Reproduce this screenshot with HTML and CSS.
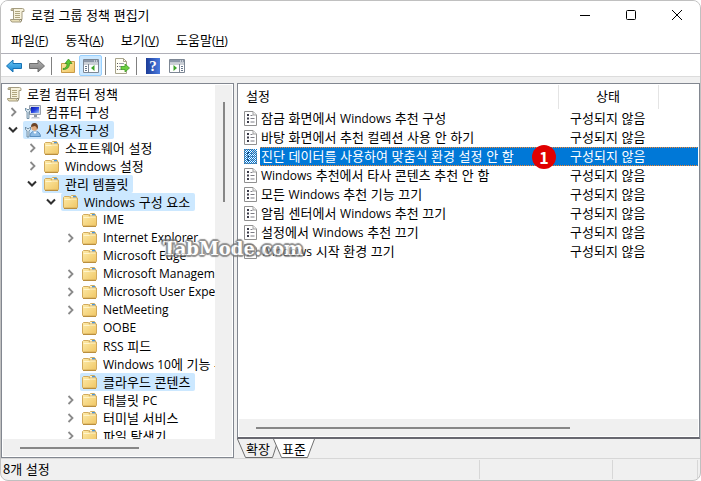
FILE: index.html
```html
<!DOCTYPE html>
<html lang="ko">
<head>
    <meta charset="UTF-8">
    <meta name="viewport" content="width=device-width, initial-scale=1.0">
    <title>로컬 그룹 정책 편집기</title>
    <link rel="stylesheet" href="styles.css">
</head>
<body>
    <!-- shared icons -->
    <svg class="sprite" aria-hidden="true">
        <defs>
            <linearGradient id="gold" x1="0" y1="0" x2="1" y2="1">
                <stop offset="0" stop-color="#fdebaa"/>
                <stop offset="1" stop-color="#f0c663"/>
            </linearGradient>
            <linearGradient id="screen" x1="0" y1="0" x2="1" y2="1">
                <stop offset="0" stop-color="#0a18a8"/>
                <stop offset="0.5" stop-color="#2440e0"/>
                <stop offset="1" stop-color="#9cc4f8"/>
            </linearGradient>
            <linearGradient id="blue" x1="0" y1="0" x2="0" y2="1">
                <stop offset="0" stop-color="#6cc8f4"/>
                <stop offset="1" stop-color="#1482d0"/>
            </linearGradient>
            <linearGradient id="gray" x1="0" y1="0" x2="0" y2="1">
                <stop offset="0" stop-color="#b4b4b4"/>
                <stop offset="1" stop-color="#7c7c7c"/>
            </linearGradient>
            <pattern id="dither" width="2" height="2" patternUnits="userSpaceOnUse">
                <path d="M0 0h1v1H0zM1 1h1v1H1z" fill="#0078d7"/>
            </pattern>
        </defs>
        <symbol id="scroll" viewBox="0 0 16 16">
            <path d="M3.500 1.500h10q1.500 0 1.500 1.500v1.500h-2v8H4.500V3.500q0-1-1-2z" fill="#f7f2dc" stroke="#a49c80"/>
            <path d="M1.500 12.500h9q0 2 1.500 2.500H3q-1.500-.5-1.500-2.500z" fill="#e9dfb8" stroke="#a49c80"/>
            <path d="M3 1.500q-1.500.5-1 2h2.500q0-2-1.500-2z" fill="#d8cfae" stroke="#a49c80"/>
            <path d="M6 4.500h5M6 6.500h5M6 8.500h5M6 10.500h5" stroke="#b0a67f"/>
            <path d="M11 12.500h1.500v2" stroke="#8c8468" fill="none"/>
        </symbol>
        <symbol id="folder" viewBox="0 0 16 16">
            <path d="M7.500 4.500v-2l1-1h4l1 1v2z" fill="#fff3cc" stroke="#d0ae62"/>
            <path d="M10 2h3v1.500h-3z" fill="#4a96dc"/>
            <path d="M.5 13V3.500l1-1h5l1 1.500h7V13q0 1-1 1h-12q-1 0-1-1z" fill="url(#gold)" stroke="#d2aa5c"/>
            <path d="M1.500 5.500h6l1-.5h5" stroke="#fff5cd" fill="none"/>
            <path d="M1 14.500h13" stroke="#b98e3e"/>
        </symbol>
        <symbol id="computer" viewBox="0 0 16 16">
            <path d="M4.500 1.500h11v9h-11z" fill="#d9dde4" stroke="#98a0ac"/>
            <path d="M6 3h8v6H6z" fill="url(#screen)"/>
            <path d="M9 11h3v2H9z" fill="#8d96a3"/>
            <path d="M7 13h7l1 1.500H6z" fill="#c2c8d0"/>
            <path d="M.5 4v2.500L2 8v6.500h2V8l1.500-1.500V4L4 5.500H2z" fill="#d6e4ee" stroke="#5d7f98" stroke-width=".8"/>
        </symbol>
        <symbol id="user" viewBox="0 0 16 16">
            <path d="M5 14.500q0-5 5-5.500 5 .5 5.500 5.500z" fill="#8ebce4" stroke="#5a8fc0"/>
            <path d="M8 9.500l2 2.500 2-2.500z" fill="#fff"/>
            <circle cx="9.500" cy="5.500" r="3.200" fill="#e0aa7c"/>
            <path d="M6 5q0-4 3.500-4T13 5.500l-1 2q0-3-2-3.500-2 .5-4 1z" fill="#6c4528"/>
            <path d="M.5 5v2.500L2 9v6h2V9l1.500-1.500V5L4 6.500H2z" fill="#d6e4ee" stroke="#5d7f98" stroke-width=".8"/>
        </symbol>
        <symbol id="right" viewBox="0 0 8 10">
            <path d="M2.500 1l4 4-4 4" fill="none" stroke="#8a8a8a" stroke-width="1.800"/>
        </symbol>
        <symbol id="down" viewBox="0 0 10 8">
            <path d="M1 1.500l4 4 4-4" fill="none" stroke="#303030" stroke-width="2"/>
        </symbol>
        <symbol id="policy" viewBox="0 0 13 15">
            <path d="M.5.5h8.500l3.500 3.500v10.500H.5z" fill="#fff" stroke="#909090"/>
            <path d="M9 .5v3.500h3.500" fill="#eee" stroke="#a0a0a0"/>
            <path d="M3 3h2v2H3zM3 6.500h2v2H3zM3 10h2v2H3z" fill="#3a3a48"/>
            <path d="M6.500 4.500h2M6.500 7.500h4M6.500 11h4" stroke="#7c7c84"/>
        </symbol>
    </svg>

    <div class="window">
        <header class="titlebar">
            <svg class="icon"><use href="#scroll"/></svg>
            <h1>로컬 그룹 정책 편집기</h1>
            <div class="controls">
                <button type="button" aria-label="최소화"><svg width="10" height="10"><path d="M0 5.500h10" stroke="#000"/></svg></button>
                <button type="button" aria-label="최대화"><svg width="10" height="10"><rect x=".5" y=".5" width="9" height="9" rx="1" fill="none" stroke="#000"/></svg></button>
                <button type="button" aria-label="닫기"><svg width="10" height="10"><path d="M0 0l10 10M10 0L0 10" stroke="#000"/></svg></button>
            </div>
        </header>

        <nav class="menu">
            <button type="button">파일<span class="latin">(<u>F</u>)</span></button>
            <button type="button">동작<span class="latin">(<u>A</u>)</span></button>
            <button type="button">보기<span class="latin">(<u>V</u>)</span></button>
            <button type="button">도움말<span class="latin">(<u>H</u>)</span></button>
        </nav>

        <div class="toolbar">
            <button type="button" aria-label="뒤로"><svg width="16" height="16"><path d="M.5 8L7 2v3.500h8.500v5H7V14z" fill="url(#blue)" stroke="#1672b4"/></svg></button>
            <button type="button" aria-label="앞으로"><svg width="16" height="16"><path d="M15.500 8L9 2v3.500H.5v5H9V14z" fill="url(#gray)" stroke="#6e6e6e"/></svg></button>
            <span class="divider"></span>
            <button type="button" aria-label="위로"><svg width="16" height="16">
                <path d="M1.500 14.500v-9h5l1-2h7v11z" fill="url(#gold)" stroke="#c89a48"/>
                <path d="M3 10.500q4 0 4-5H5L8.500 1 12 5.500H9.500q0 6-6.500 6z" fill="#5cc832" stroke="#32881c" stroke-width=".7"/>
            </svg></button>
            <button type="button" class="active" aria-label="콘솔 트리 표시/숨기기"><svg width="16" height="14">
                <path d="M.5.500h15v13H.5z" fill="#fff" stroke="#7d8794"/>
                <path d="M1 1h14v2.500H1z" fill="#8d98a8"/>
                <path d="M11 2h1M13 2h1" stroke="#fff"/>
                <path d="M1 5h14" stroke="#9aa2ae"/>
                <path d="M5.500 5v9" stroke="#7d8794"/>
                <path d="M2 7.500h2M2 9.500h2M2 11.500h2" stroke="#68788c"/>
                <path d="M11.500 6v6L8 9z" fill="#3ca428"/>
            </svg></button>
            <span class="divider"></span>
            <button type="button" aria-label="목록 내보내기"><svg width="16" height="16">
                <path d="M1.500.5h8l3 3v12h-11z" fill="#fffef4" stroke="#a8a48c"/>
                <path d="M9.500.5v3h3" fill="none" stroke="#a8a48c"/>
                <path d="M3 5.500h1M3 8.500h1M3 11.500h1" stroke="#555"/>
                <path d="M5 5.500h5M5 8.500h3M5 11.500h3" stroke="#9c9cac"/>
                <path d="M7 8.500h4V6l4.500 4-4.500 4v-2.500H7z" fill="#6cd040" stroke="#3c9c24" stroke-width=".8"/>
            </svg></button>
            <span class="divider"></span>
            <button type="button" class="help" aria-label="도움말">?</button>
            <button type="button" aria-label="작업 창 표시/숨기기"><svg width="16" height="14">
                <path d="M.5.500h15v13H.5z" fill="#fff" stroke="#7d8794"/>
                <path d="M1 1h14v2.500H1z" fill="#8d98a8"/>
                <path d="M11 2h1M13 2h1" stroke="#fff"/>
                <path d="M1 5h14" stroke="#9aa2ae"/>
                <path d="M10.500 5v9" stroke="#7d8794"/>
                <path d="M12 7.500h2M12 9.500h2M12 11.500h2" stroke="#68788c"/>
                <path d="M4.500 6v6L8 9z" fill="#3ca428"/>
            </svg></button>
        </div>

        <main class="panes">
            <section class="tree-pane">
                <ul class="tree">
                    <li class="level0"><svg class="icon"><use href="#scroll"/></svg><span>로컬 컴퓨터 정책</span></li>
                    <li class="level1"><svg class="right"><use href="#right"/></svg><a href="#"><svg class="icon"><use href="#computer"/></svg><span>컴퓨터 구성</span></a></li>
                    <li class="level1"><svg class="down"><use href="#down"/></svg><a href="#" class="marked"><svg class="icon"><use href="#user"/></svg><span>사용자 구성</span></a></li>
                    <li class="level2"><svg class="right"><use href="#right"/></svg><a href="#"><svg class="icon"><use href="#folder"/></svg><span>소프트웨어 설정</span></a></li>
                    <li class="level2"><svg class="right"><use href="#right"/></svg><a href="#"><svg class="icon"><use href="#folder"/></svg><span><span class="latin">Windows</span> 설정</span></a></li>
                    <li class="level2"><svg class="down"><use href="#down"/></svg><a href="#" class="marked"><svg class="icon"><use href="#folder"/></svg><span>관리 템플릿</span></a></li>
                    <li class="level3"><svg class="down"><use href="#down"/></svg><a href="#" class="marked"><svg class="icon"><use href="#folder"/></svg><span><span class="latin">Windows</span> 구성 요소</span></a></li>
                    <li class="level4"><svg class="right"></svg><a href="#"><svg class="icon"><use href="#folder"/></svg><span class="latin">IME</span></a></li>
                    <li class="level4"><svg class="right"><use href="#right"/></svg><a href="#"><svg class="icon"><use href="#folder"/></svg><span class="latin">Internet Explorer</span></a></li>
                    <li class="level4"><svg class="right"></svg><a href="#"><svg class="icon"><use href="#folder"/></svg><span class="latin">Microsoft Edge</span></a></li>
                    <li class="level4"><svg class="right"><use href="#right"/></svg><a href="#"><svg class="icon"><use href="#folder"/></svg><span class="latin">Microsoft Management</span></a></li>
                    <li class="level4"><svg class="right"><use href="#right"/></svg><a href="#"><svg class="icon"><use href="#folder"/></svg><span class="latin">Microsoft User Experience</span></a></li>
                    <li class="level4"><svg class="right"><use href="#right"/></svg><a href="#"><svg class="icon"><use href="#folder"/></svg><span class="latin">NetMeeting</span></a></li>
                    <li class="level4"><svg class="right"></svg><a href="#"><svg class="icon"><use href="#folder"/></svg><span class="latin">OOBE</span></a></li>
                    <li class="level4"><svg class="right"></svg><a href="#"><svg class="icon"><use href="#folder"/></svg><span><span class="latin">RSS</span> 피드</span></a></li>
                    <li class="level4"><svg class="right"></svg><a href="#"><svg class="icon"><use href="#folder"/></svg><span><span class="latin">Windows 10</span>에 기능 추가</span></a></li>
                    <li class="level4"><svg class="right"></svg><a href="#" class="marked"><svg class="icon"><use href="#folder"/></svg><span>클라우드 콘텐츠</span></a></li>
                    <li class="level4"><svg class="right"><use href="#right"/></svg><a href="#"><svg class="icon"><use href="#folder"/></svg><span>태블릿 <span class="latin">PC</span></span></a></li>
                    <li class="level4"><svg class="right"><use href="#right"/></svg><a href="#"><svg class="icon"><use href="#folder"/></svg><span>터미널 서비스</span></a></li>
                    <li class="level4"><svg class="right"><use href="#right"/></svg><a href="#"><svg class="icon"><use href="#folder"/></svg><span>파일 탐색기</span></a></li>
                </ul>
                <div class="vscroll"><span class="thumb"></span></div>
                <div class="hscroll"><span class="thumb"></span></div>
            </section>

            <section class="list-pane">
                <div class="list">
                    <table>
                        <thead>
                            <tr><th class="name">설정</th><th class="state">상태</th><th></th></tr>
                        </thead>
                        <tbody>
                            <tr><td><svg class="policy"><use href="#policy"/></svg><span class="title">잠금 화면에서 <span class="latin">Windows</span> 추천 구성</span></td><td>구성되지 않음</td><td></td></tr>
                            <tr><td><svg class="policy"><use href="#policy"/></svg><span class="title">바탕 화면에서 추천 컬렉션 사용 안 하기</span></td><td>구성되지 않음</td><td></td></tr>
                            <tr class="selected"><td><svg class="policy"><use href="#policy"/><rect width="13" height="15" fill="url(#dither)"/></svg><span class="title">진단 데이터를 사용하여 맞춤식 환경 설정 안 함</span><b class="badge">1</b></td><td>구성되지 않음</td><td></td></tr>
                            <tr><td><svg class="policy"><use href="#policy"/></svg><span class="title"><span class="latin">Windows</span> 추천에서 타사 콘텐츠 추천 안 함</span></td><td>구성되지 않음</td><td></td></tr>
                            <tr><td><svg class="policy"><use href="#policy"/></svg><span class="title">모든 <span class="latin">Windows</span> 추천 기능 끄기</span></td><td>구성되지 않음</td><td></td></tr>
                            <tr><td><svg class="policy"><use href="#policy"/></svg><span class="title">알림 센터에서 <span class="latin">Windows</span> 추천 끄기</span></td><td>구성되지 않음</td><td></td></tr>
                            <tr><td><svg class="policy"><use href="#policy"/></svg><span class="title">설정에서 <span class="latin">Windows</span> 추천 끄기</span></td><td>구성되지 않음</td><td></td></tr>
                            <tr><td><svg class="policy"><use href="#policy"/></svg><span class="title"><span class="latin">Windows</span> 시작 환경 끄기</span></td><td>구성되지 않음</td><td></td></tr>
                        </tbody>
                    </table>
                    <div class="hscroll"><span class="thumb"></span></div>
                </div>
                <div class="tabs">
                    <button type="button"><svg width="42" height="19"><path d="M.5 0l8 18.500h27L41.500 0" fill="#f0f0f0" stroke="#707070"/></svg><span>확장</span></button>
                    <button type="button"><svg width="42" height="19"><path d="M.5 0l8 18.500h26L41.500 0" fill="#fff" stroke="#707070"/></svg><span>표준</span></button>
                </div>
            </section>
            <div class="watermark">TabMode.com</div>
        </main>

        <footer class="status">
            <span class="message">8개 설정</span>
            <span class="cell wide"></span>
            <span class="cell"></span>
        </footer>
    </div>
</body>
</html>
```
FILE: styles.css
```css
* {
    box-sizing: border-box;
}
body {
    margin: 0;
    background-color: #fff;
    color: #000;
    font-family: "Noto Sans CJK KR", sans-serif;
    font-size: 13px;
    line-height: 18px;
}
button {
    margin: 0;
    padding: 0;
    border: 0;
    background: none;
    font: inherit;
    color: inherit;
}
a {
    color: inherit;
    text-decoration: none;
}
svg {
    display: block;
    flex: none;
}
.sprite {
    position: absolute;
    width: 0;
    height: 0;
}
.icon {
    width: 16px;
    height: 16px;
}
.latin {
    font-family: "Open Sans", "Noto Sans", sans-serif;
    font-size: 12px;
    line-height: 16px;
}
.window {
    display: flex;
    flex-direction: column;
    height: 100vh;
    border: 1px solid #c0c0c0;
    border-radius: 8px;
    background-color: #f0f0f0;
    overflow: hidden;
}

/* title bar and menu */
.titlebar {
    display: flex;
    align-items: center;
    gap: 6px;
    height: 28px;
    padding-left: 8px;
    background-color: #fff;
}
.titlebar h1 {
    flex: 1;
    margin: 0;
    font-size: 13px;
    font-weight: normal;
}
.controls {
    display: flex;
}
.controls button {
    display: flex;
    align-items: center;
    justify-content: center;
    width: 46px;
    height: 28px;
}
.menu {
    display: flex;
    gap: 17px;
    height: 25px;
    padding: 2px 10px 4px;
    background-color: #fff;
    border-bottom: 1px solid #b0b0b8;
}

/* toolbar */
.toolbar {
    display: flex;
    align-items: center;
    height: 23px;
    padding-top: 1px;
    padding-left: 1px;
    background-color: #fff;
    border-bottom: 1px solid #dcdcdc;
}
.toolbar button {
    display: flex;
    align-items: center;
    justify-content: center;
    width: 23px;
    height: 21px;
}
.toolbar .active {
    background-color: #cce8ff;
    border: 1px solid #99d1ff;
    border-radius: 2px;
}
.toolbar .help {
    width: 14px;
    height: 16px;
    margin: 0 5px;
    background: linear-gradient(90deg, #1c3c98, #4a7ce0);
    color: #fff;
    font-family: "Liberation Serif", serif;
    font-size: 15px;
    font-weight: bold;
}
.divider {
    width: 1px;
    height: 18px;
    margin: 0 4px 0 3px;
    background-color: #808080;
}

/* panes */
.panes {
    position: relative;
    display: flex;
    flex: 1;
    gap: 3px;
    min-height: 0;
    padding-top: 6px;
}
.tree-pane {
    display: grid;
    grid-template: minmax(0, 1fr) 17px / minmax(0, 1fr) 17px;
    width: 233px;
    padding: 1px;
    border: 1px solid #828790;
    background-color: #fff;
}
.tree {
    margin: 0;
    padding: 0;
    list-style: none;
    overflow: hidden;
}
.tree li {
    display: flex;
    align-items: center;
    gap: 5px;
    height: 18px;
    white-space: nowrap;
}
.tree a {
    display: flex;
    align-items: center;
    gap: 5px;
    height: 18px;
    padding: 0 5px 0 2px;
    border-radius: 2px;
}
.tree .marked {
    background-color: #cce8ff;
}
.tree .right {
    width: 8px;
    height: 10px;
    margin: 0 1px;
}
.tree .down {
    width: 10px;
    height: 8px;
}
.level0 {
    padding-left: 3px;
}
.level1 {
    padding-left: 5px;
}
.level2 {
    padding-left: 24px;
}
.level3 {
    padding-left: 43px;
}
.level4 {
    padding-left: 62px;
}
.vscroll {
    display: flex;
    justify-content: center;
    padding-top: 17px;
    background-color: #f0f0f0;
}
.vscroll .thumb {
    width: 2px;
    height: 100px;
    background-color: #868686;
}
.hscroll {
    display: flex;
    align-items: center;
    grid-column: 1 / -1;
    height: 17px;
    padding-left: 17px;
    background-color: #f0f0f0;
}
.hscroll .thumb {
    width: 56%;
    height: 2px;
    background-color: #868686;
}

/* policy list */
.list-pane {
    display: flex;
    flex: 1;
    flex-direction: column;
    min-width: 0;
}
.list {
    display: flex;
    flex: 1;
    flex-direction: column;
    justify-content: space-between;
    min-height: 0;
    padding: 1px;
    border: 1px solid #828790;
    border-bottom: 2px solid #686870;
    background-color: #fff;
}
.list .hscroll .thumb {
    width: 71%;
}
table {
    width: 100%;
    border-collapse: collapse;
    table-layout: fixed;
}
th {
    height: 24px;
    padding: 0 0 2px;
    border-right: 1px solid #e4e4e4;
    font-weight: normal;
}
th:last-child {
    border-right: 0;
}
.name {
    width: 319px;
    padding-left: 7px;
    text-align: left;
}
.state {
    width: 100px;
}
td {
    height: 19px;
    padding: 0;
    line-height: 18px;
    vertical-align: top;
    white-space: nowrap;
}
td:first-child {
    display: flex;
    align-items: center;
    gap: 3px;
    padding-left: 5px;
}
.title {
    flex: 1;
    height: 19px;
    padding-left: 1px;
}
td:nth-child(2) {
    padding-left: 12px;
}
.policy {
    width: 13px;
    height: 15px;
}
.selected td:not(:first-child),
.selected .title {
    background:
        repeating-linear-gradient(90deg, #ff8728 0 1px, #0078d7 1px 2px) top / 100% 1px no-repeat,
        repeating-linear-gradient(90deg, #ff8728 0 1px, #0078d7 1px 2px) bottom / 100% 1px no-repeat,
        #0078d7;
    color: #fff;
}
.selected td:first-child {
    position: relative;
}
.badge {
    position: absolute;
    right: 2px;
    top: -2px;
    width: 24px;
    height: 24px;
    border-radius: 50%;
    background-color: #e00000;
    color: #fff;
    font-size: 16px;
    line-height: 24px;
    text-align: center;
}
.tabs {
    display: flex;
    height: 19px;
}
.tabs button {
    display: grid;
    width: 42px;
    margin-right: -6px;
    place-items: center;
}
.tabs svg,
.tabs span {
    grid-area: 1 / 1;
}
.watermark {
    position: absolute;
    left: 162px;
    top: 160px;
    color: #fff;
    font-family: "DejaVu Serif", serif;
    font-size: 18px;
    font-weight: bold;
    line-height: 24px;
    opacity: 0.8;
    text-shadow: 2px 0 1px #777, -2px 0 1px #777, 0 2px 1px #777, 0 -2px 1px #777, 1px 1px 1px #777, -1px -1px 1px #777, 1px -1px 1px #777, -1px 1px 1px #777;
    pointer-events: none;
}

/* status bar */
.status {
    display: flex;
    height: 22px;
    padding: 1px 2px;
    border-top: 1px solid #d7d7d7;
}
.status .message {
    flex: 1;
}
.status .cell {
    width: 86px;
    border-left: 1px solid #d7d7d7;
    border-right: 1px solid #d7d7d7;
}
.status .wide {
    width: 133px;
    border-right: 0;
}
```
